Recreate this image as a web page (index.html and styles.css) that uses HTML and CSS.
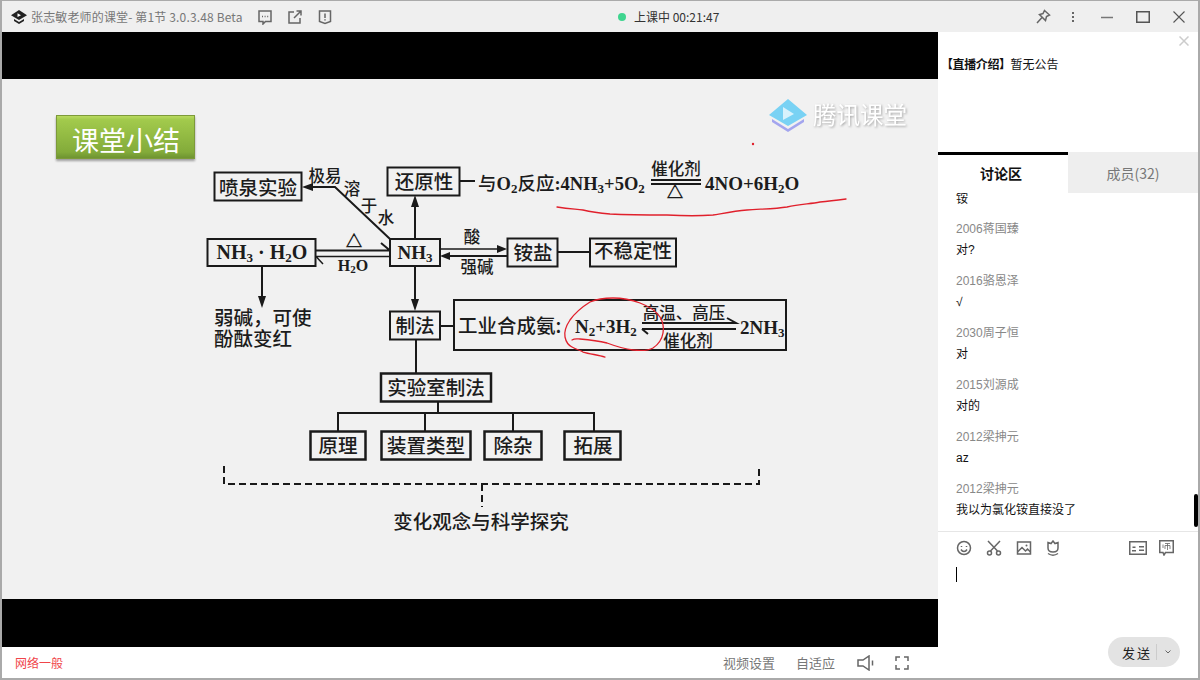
FILE: index.html
```html
<!DOCTYPE html>
<html lang="zh-CN">

<head>
    <meta charset="UTF-8">
    <meta name="viewport" content="width=device-width, initial-scale=1.0">
    <title>张志敏老师的课堂</title>
    <link rel="stylesheet" href="styles.css">
</head>

<body>
    <div class="window">
        <header class="titlebar">
            <div class="title-left">
                <svg class="app-logo" width="16" height="14" viewBox="0 0 16 14">
                    <path d="M8 0 16 5.200 8 10 0 5.200Z" fill="#222" />
                    <path d="M3 9 8 12 13 9V11L8 14 3 11Z" fill="#222" />
                    <path d="M6.500 3.300 10 5.200 6.500 7Z" fill="#fff" />
                </svg>
                <span class="app-title">张志敏老师的课堂- 第1节 3.0.3.48 Beta</span>
                <svg class="title-icon" width="16" height="16" viewBox="0 0 16 16">
                    <path d="M2 2H14V12.500H8.500L6 15V12.500H2Z" class="ico" />
                    <path d="M5 7.500H6M7.600 7.500H8.600M10.200 7.500H11.200" class="ico" />
                </svg>
                <svg class="title-icon" width="16" height="16" viewBox="0 0 16 16">
                    <path d="M7 3H2V14H13V9" class="ico" />
                    <path d="M7 9 14 2M9.500 2H14V6.500" class="ico" />
                </svg>
                <svg class="title-icon" width="16" height="16" viewBox="0 0 16 16">
                    <path d="M2.500 2H13.500V12.500L8 14.500 2.500 12.500Z" class="ico" />
                    <path d="M8 4.500V9M8 10.300V11.500" class="ico" />
                </svg>
            </div>
            <div class="status"><span class="status-dot"></span>上课中 00:21:47</div>
            <div class="window-btns">
                <svg width="16" height="16" viewBox="0 0 16 16">
                    <path d="M9.500 1.500 14.500 6 11.500 7.500 10.500 11.500 4.500 5.500 8 4.500ZM7 8.500 2 14" class="ico" />
                </svg>
                <svg class="more-dots" width="4" height="12" viewBox="0 0 4 12">
                    <path d="M1 1H3V3H1ZM1 5H3V7H1ZM1 9H3V11H1Z" fill="#666" />
                </svg>
                <svg width="12" height="12" viewBox="0 0 12 12">
                    <path d="M0 6.500H12" stroke="#777" stroke-width="1.500" />
                </svg>
                <svg width="14" height="12" viewBox="0 0 14 12">
                    <path d="M.75.750H13.250V11.250H.75Z" fill="none" stroke="#555" stroke-width="1.500" />
                </svg>
                <svg width="12" height="12" viewBox="0 0 12 12">
                    <path d="M.5.500 11.500 11.500M11.500.500.5 11.500" stroke="#555" stroke-width="1.100" />
                </svg>
            </div>
        </header>

        <div class="main">
            <section class="stage">
                <div class="letterbox letterbox-top"></div>

                <svg class="slide" width="936" height="520" viewBox="2 79 936 520">
                    <defs>
                        <linearGradient id="greenFill" x1="0" y1="0" x2="0" y2="1">
                            <stop offset="0" stop-color="#bcdc62" />
                            <stop offset="0.1" stop-color="#a2ca4c" />
                            <stop offset="0.85" stop-color="#83ab3a" />
                            <stop offset="1" stop-color="#6d9230" />
                        </linearGradient>
                    </defs>

                    <!-- heading badge -->
                    <rect x="56.500" y="115.500" width="138" height="43" fill="url(#greenFill)" class="badge" />
                    <text x="126" y="151" class="badge-text">课堂小结</text>

                    <!-- watermark -->
                    <path d="M772 119 788 129 804 119 804 122 788 132 772 122Z" fill="#a3a5ee" />
                    <path d="M769 115 788 99 807 115 788 126Z" fill="#79d2f4" />
                    <path d="M783 107 794 114 783 120Z" fill="#d8f2fc" />
                    <text x="813" y="124" class="watermark">腾讯课堂</text>

                    <!-- boxes -->
                    <rect x="214.500" y="172.500" width="87" height="28" class="box" />
                    <rect x="387.500" y="167.500" width="72" height="28" class="box" />
                    <rect x="207.500" y="239" width="108" height="27" class="box" />
                    <rect x="390" y="239" width="50" height="27" class="box" />
                    <rect x="507.500" y="238.500" width="50" height="28" class="box" />
                    <rect x="590" y="238.500" width="86" height="28" class="box" />
                    <rect x="390" y="311.500" width="50" height="28" class="box" />
                    <rect x="454" y="300" width="332" height="50" class="box" />
                    <rect x="381" y="373.500" width="110" height="28" class="box thick" />
                    <rect x="310.500" y="431.500" width="55" height="28" class="box thick" />
                    <rect x="381.500" y="431.500" width="89" height="28" class="box thick" />
                    <rect x="484.500" y="431.500" width="57" height="28" class="box thick" />
                    <rect x="564.500" y="431.500" width="56" height="28" class="box thick" />

                    <!-- connectors -->
                    <path d="M390 239 335 187H310" class="line" />
                    <path d="M302 187 313 183V191Z" class="head" />
                    <path d="M415 239V203" class="line" />
                    <path d="M415 195 411 207H419Z" class="head" />
                    <path d="M415 266V303" class="line" />
                    <path d="M415 311 411 299H419Z" class="head" />
                    <path d="M262 266V300" class="line" />
                    <path d="M262 308 258 296H266Z" class="head" />
                    <path d="M316 250.500H390M381 243 390 250.500" class="line" />
                    <path d="M316 256.500H390M316 256.500 323 264" class="line thin" />
                    <path d="M440 249H500" class="line thin" />
                    <path d="M507 249 497 245V253Z" class="head" />
                    <path d="M448 256H507" class="line" />
                    <path d="M440 256 450 252V260Z" class="head" />
                    <path d="M558 252H590M460 181H475M440 326H454M416 339V373M438 402V413M338 431V413H594V431M425 413V431M513 413V431" class="line" />
                    <path d="M224 466V484H759V466M482 484V507" class="dash" />
                    <path d="M651 180H701M651 184H701" class="line" />
                    <path d="M642 323H736L727 318M642 329H736M642 329 648 334" class="line" />

                    <!-- labels -->
                    <text x="258" y="195" class="zh">喷泉实验</text>
                    <text x="424" y="189" class="zh">还原性</text>
                    <text x="262" y="259" class="en en-wide">NH<tspan class="sub" dy="3">3</tspan><tspan dy="-3"> · H</tspan><tspan class="sub" dy="3">2</tspan><tspan dy="-3">O</tspan></text>
                    <text x="415" y="259" class="en">NH<tspan class="sub" dy="3">3</tspan></text>
                    <text x="533" y="260" class="zh">铵盐</text>
                    <text x="633" y="258" class="zh">不稳定性</text>
                    <text x="415" y="333" class="zh">制法</text>
                    <text x="436" y="395" class="zh">实验室制法</text>
                    <text x="338" y="453" class="zh">原理</text>
                    <text x="426" y="453" class="zh">装置类型</text>
                    <text x="513" y="453" class="zh">除杂</text>
                    <text x="593" y="453" class="zh">拓展</text>
                    <text x="481" y="529" class="zh">变化观念与科学探究</text>

                    <text x="325" y="182" class="small">极易</text>
                    <text x="352" y="195" class="small">溶</text>
                    <text x="369" y="212" class="small">于</text>
                    <text x="386" y="224" class="small">水</text>
                    <text x="472" y="243" class="small">酸</text>
                    <text x="477" y="273" class="small">强碱</text>
                    <text x="354" y="247" class="en-small">△</text>
                    <text x="353" y="271" class="en-small">H<tspan class="sub-small" dy="2">2</tspan><tspan dy="-2">O</tspan></text>

                    <text class="zh zh-left"><tspan x="214" y="325">弱碱，可使</tspan><tspan x="214" y="346">酚酞变红</tspan></text>

                    <text x="478" y="190" class="zh zh-left zh-tight">与<tspan class="latin">O</tspan><tspan class="sub" dy="3">2</tspan><tspan dy="-3">反应</tspan><tspan class="latin">:4NH</tspan><tspan class="sub" dy="3">3</tspan><tspan class="latin" dy="-3">+5O</tspan><tspan class="sub" dy="3">2</tspan></text>
                    <text x="676" y="175" class="small">催化剂</text>
                    <text x="675" y="198" class="en-small">△</text>
                    <text x="705" y="190" class="en en-left">4NO+6H<tspan class="sub" dy="3">2</tspan><tspan dy="-3">O</tspan></text>

                    <text x="458" y="333" class="zh zh-left">工业合成氨:</text>
                    <text x="575" y="333" class="en en-left">N<tspan class="sub" dy="3">2</tspan><tspan dy="-3">+3H</tspan><tspan class="sub" dy="3">2</tspan></text>
                    <text x="684" y="319" class="small">高温、高压</text>
                    <text x="688" y="347" class="small">催化剂</text>
                    <text x="740" y="334" class="en en-left">2NH<tspan class="sub" dy="3">3</tspan></text>

                    <!-- teacher's pen strokes -->
                    <path d="M557 207C570 209 575 209 583 210 592 212 600 213 610 214 630 215 650 215 667 215 685 216 700 216 713 215 725 213 735 211 747 210 760 209 775 209 787 207 800 204 810 204 820 202 830 201 838 200 846 199" class="pen" />
                    <path d="M572 340C575 338 578 339 580 339 590 340 598 341 607 343 615 346 625 349 633 350 642 351 648 351 653 348 659 344 662 339 663 333 664 327 663 322 660 317 656 311 648 306 640 303 632 300 622 298 613 298 604 298 597 299 590 302 582 307 575 313 570 320 566 326 564 332 565 337 566 342 568 345 572 347 577 350 580 350 583 352 590 354 598 355 605 357" class="pen" />
                    <circle cx="753" cy="144" r="1.200" fill="#e0202c" />
                </svg>

                <div class="letterbox letterbox-bottom"></div>

                <footer class="stage-footer">
                    <span class="net-state">网络一般</span>
                    <div class="stage-tools">
                        <span>视频设置</span>
                        <span>自适应</span>
                        <svg class="speaker" width="18" height="16" viewBox="0 0 18 16">
                            <path d="M1 5H6L12 1V15L6 11H1Z" class="ico" />
                            <path d="M15.500 5.500V10.500" stroke="#666" stroke-width="1.500" />
                        </svg>
                        <svg class="fullscreen" width="14" height="14" viewBox="0 0 14 14">
                            <path d="M1 5V1H5M9 1H13V5M13 9V13H9M5 13H1V9" class="ico" />
                        </svg>
                    </div>
                </footer>
            </section>

            <aside class="side">
                <div class="notice">
                    <svg class="notice-close" width="10" height="10" viewBox="0 0 10 10">
                        <path d="M.5.500 9.500 9.500M9.500.500.5 9.500" stroke="#ccc" stroke-width="1.500" />
                    </svg>
                    <p><b>【直播介绍】</b>暂无公告</p>
                </div>

                <div class="tabs">
                    <div class="tab active">讨论区</div>
                    <div class="tab">成员(32)</div>
                </div>

                <div class="chat">
                    <div class="msg-first">铵</div>
                    <div class="msg"><div class="msg-name">2006蒋国臻</div><div class="msg-text">对?</div></div>
                    <div class="msg"><div class="msg-name">2016骆恩泽</div><div class="msg-text">√</div></div>
                    <div class="msg"><div class="msg-name">2030周子恒</div><div class="msg-text">对</div></div>
                    <div class="msg"><div class="msg-name">2015刘源成</div><div class="msg-text">对的</div></div>
                    <div class="msg"><div class="msg-name">2012梁抻元</div><div class="msg-text">az</div></div>
                    <div class="msg"><div class="msg-name">2012梁抻元</div><div class="msg-text">我以为氯化铵直接没了</div></div>
                    <div class="scroll-thumb"></div>
                </div>

                <div class="composer">
                    <div class="composer-tools">
                        <svg width="16" height="16" viewBox="0 0 16 16">
                            <circle cx="8" cy="8" r="6.500" class="ico" />
                            <path d="M5.500 6V7M10.500 6V7M5 9.500C6.500 12 9.500 12 11 9.500" class="ico" />
                        </svg>
                        <svg width="16" height="16" viewBox="0 0 16 16">
                            <path d="M2 1 11.500 11M14 1 4.500 11" class="ico" />
                            <circle cx="3.500" cy="13" r="2" class="ico" />
                            <circle cx="12.500" cy="13" r="2" class="ico" />
                        </svg>
                        <svg width="16" height="16" viewBox="0 0 16 16">
                            <path d="M1.500 2H14.500V14H1.500Z" class="ico" />
                            <path d="M1.500 12 6 7.500 9.500 11 11.500 9 14.500 12" class="ico" />
                            <circle cx="10.500" cy="5.500" r="1" fill="#666" />
                        </svg>
                        <svg width="14" height="16" viewBox="0 0 14 16">
                            <path d="M2 2.500 5 3.500 7 1 9 3.500 12 2.500V8C12 10.500 10 12 7 12S2 10.500 2 8Z" class="ico" />
                            <path d="M2 13.500C5 15.500 9 15.500 12 13.500" class="ico" />
                        </svg>
                        <svg class="tool-push" width="18" height="14" viewBox="0 0 18 14">
                            <path d="M.75.750H17.250V13.250H.75Z" class="ico" />
                            <path d="M3.500 5.500H6.500V7H3.500ZM3 9H7V10.500H3ZM10 5H15V6.500H10ZM10 8.500H15V10H10Z" fill="#666" />
                        </svg>
                        <svg class="tool-last" width="15" height="16" viewBox="0 0 15 16">
                            <path d="M.75.750H14.250V12.500H6.500L5 15 4 12.500H.75Z" class="ico" />
                            <path d="M4 4.500V8M6 3.500H11M8.500 3.500V10M6 5.500V9M11 5.500V9M6 5.500H11" class="ico ico-thin" />
                        </svg>
                    </div>
                    <div class="caret"></div>
                    <div class="send-row">
                        <div class="send-btn">
                            <span class="send-label">发送</span>
                            <span class="send-divider"></span>
                            <svg width="6" height="4" viewBox="0 0 6 4">
                                <path d="M.5.500 3 3 5.500.5" fill="none" stroke="#666" />
                            </svg>
                        </div>
                    </div>
                </div>
            </aside>
        </div>
    </div>
</body>

</html>
```

FILE: styles.css
```css
* {
    box-sizing: border-box;
}

html,
body {
    margin: 0;
    padding: 0;
}

body {
    font-family: "Noto Sans CJK SC", "Noto Sans", sans-serif;
    font-size: 12px;
    color: #222;
    background: #fff;
}

.window {
    width: 1200px;
    height: 680px;
    display: flex;
    flex-direction: column;
    overflow: hidden;
    border-style: solid;
    border-color: #aaa;
    border-width: 1px 2px 2px 2px;
}

.ico {
    fill: none;
    stroke: #666;
    stroke-width: 1.500;
}

.ico-thin {
    stroke-width: 0.800;
}

/* title bar */
.titlebar {
    height: 31px;
    flex: none;
    display: grid;
    grid-template-columns: 616px auto 1fr;
    align-items: center;
    background: #efefef;
}

.title-left {
    display: flex;
    align-items: center;
    padding-left: 9px;
}

.app-logo {
    margin-right: 4px;
}

.app-title {
    color: #777;
    width: 226px;
    letter-spacing: 0.15px;
    white-space: nowrap;
}

.title-icon {
    margin-right: 14px;
}

.status {
    display: flex;
    align-items: center;
    color: #333;
}

.status-dot {
    width: 8px;
    height: 8px;
    margin-right: 8px;
    border-radius: 50%;
    background: #3fd58f;
}

.window-btns {
    display: flex;
    align-items: center;
    justify-content: flex-end;
    gap: 23px;
    padding-right: 13px;
}

.more-dots {
    margin: 0 3px 0 -3px;
}

/* stage */
.main {
    flex: 1;
    display: flex;
    min-height: 0;
}

.stage {
    width: 936px;
    flex: none;
    display: flex;
    flex-direction: column;
}

.letterbox {
    background: #000;
    flex: none;
}

.letterbox-top {
    height: 47px;
}

.letterbox-bottom {
    height: 48px;
}

.slide {
    display: block;
    flex: none;
    background: #f1f1f1;
}

.badge {
    stroke: #7d9a3a;
    stroke-width: 1;
    filter: drop-shadow(0 2px 1px rgba(0, 0, 0, 0.35));
}

.badge-text {
    font-size: 27px;
    fill: #fff;
    text-anchor: middle;
}

.watermark {
    font-size: 23.500px;
    fill: #fff;
    filter: drop-shadow(1px 1px 1px rgba(0, 0, 0, 0.3));
}

.box {
    fill: none;
    stroke: #1a1a1a;
    stroke-width: 2;
}

.thick {
    stroke-width: 2.500;
}

.line {
    fill: none;
    stroke: #1a1a1a;
    stroke-width: 2;
}

.thin {
    stroke-width: 1.500;
}

.dash {
    fill: none;
    stroke: #1a1a1a;
    stroke-width: 2;
    stroke-dasharray: 7 4;
}

.head {
    fill: #1a1a1a;
}

.zh {
    font-size: 19.500px;
    font-weight: 500;
    fill: #1c1c1c;
    text-anchor: middle;
}

.zh-tight {
    font-size: 18.500px;
}

.small {
    font-size: 16.500px;
    font-weight: 500;
    fill: #1c1c1c;
    text-anchor: middle;
}

.en {
    font-family: "Liberation Serif", serif;
    font-size: 19px;
    font-weight: 700;
    fill: #1c1c1c;
    text-anchor: middle;
}

.en-wide {
    font-size: 20px;
}

.zh-left,
.en-left {
    text-anchor: start;
}

.en-small {
    font-family: "Liberation Serif", serif;
    font-size: 16px;
    font-weight: 700;
    fill: #1c1c1c;
    text-anchor: middle;
}

.latin {
    font-family: "Liberation Serif", serif;
    font-weight: 700;
}

.sub {
    font-family: "Liberation Serif", serif;
    font-weight: 700;
    font-size: 13px;
}

.sub-small {
    font-size: 11px;
}

.pen {
    fill: none;
    stroke: #e0202c;
    stroke-width: 1.300;
    stroke-linecap: round;
}

.stage-footer {
    flex: 1;
    display: flex;
    align-items: center;
    justify-content: space-between;
    padding: 0 29px 0 13px;
    background: #fff;
}

.net-state {
    color: #f0454a;
}

.stage-tools {
    display: flex;
    align-items: center;
    color: #777;
    font-size: 13px;
    gap: 21px;
}

.speaker {
    margin-left: 1px;
}

.fullscreen {
    margin-left: -1px;
}

/* side panel */
.side {
    flex: 1;
    display: flex;
    flex-direction: column;
    min-width: 0;
    background: #fff;
}

.notice {
    height: 120px;
    flex: none;
    padding: 23px 3px 0;
    position: relative;
}

.notice p {
    margin: 0;
    color: #111;
}

.notice b {
    letter-spacing: -0.4px;
}

.notice-close {
    position: absolute;
    top: 4px;
    right: 9px;
}

.tabs {
    display: flex;
    flex: none;
    height: 41px;
}

.tab {
    flex: 1;
    display: flex;
    align-items: center;
    justify-content: center;
    background: #eee;
    color: #777;
    font-size: 14px;
}

.tab.active {
    flex: none;
    width: 130px;
    background: #fff;
    color: #111;
    font-weight: 700;
    border-top: 3px solid #000;
    padding: 0 4px 2px 0;
}

.chat {
    position: relative;
    height: 339px;
    flex: none;
    overflow: hidden;
    padding: 0 18px;
    border-bottom: 1px solid #e6e6e6;
    font-family: "Liberation Sans", "Noto Sans CJK SC", sans-serif;
}

.msg-first {
    height: 12px;
    line-height: 12px;
    color: #111;
}

.msg {
    height: 52px;
    padding-top: 14px;
}

.msg-name {
    color: #888;
    height: 21px;
    line-height: 21px;
}

.msg-text {
    color: #111;
    height: 21px;
    line-height: 21px;
}

.scroll-thumb {
    position: absolute;
    right: 0;
    top: 301px;
    width: 4px;
    height: 33px;
    background: #000;
    border-radius: 2px;
}

.composer {
    flex: 1;
    display: flex;
    flex-direction: column;
    padding: 8px 18px 0 18px;
}

.composer-tools {
    display: flex;
    align-items: center;
    gap: 14px;
}

.tool-push {
    margin-left: auto;
}

.tool-last {
    margin: 0 6px 0 -2px;
}

.caret {
    width: 1px;
    height: 15px;
    margin-top: 11px;
    background: #000;
}

.send-row {
    display: flex;
    justify-content: flex-end;
    margin-top: 55px;
}

.send-btn {
    width: 72px;
    height: 30px;
    display: flex;
    align-items: center;
    padding-left: 14px;
    border-radius: 15px;
    background: #e3e3e3;
    color: #222;
    font-size: 13px;
}

.send-label {
    width: 34px;
    letter-spacing: 2px;
    white-space: nowrap;
}

.send-divider {
    width: 1px;
    height: 16px;
    margin-right: 8px;
    background: #ccc;
}
```
